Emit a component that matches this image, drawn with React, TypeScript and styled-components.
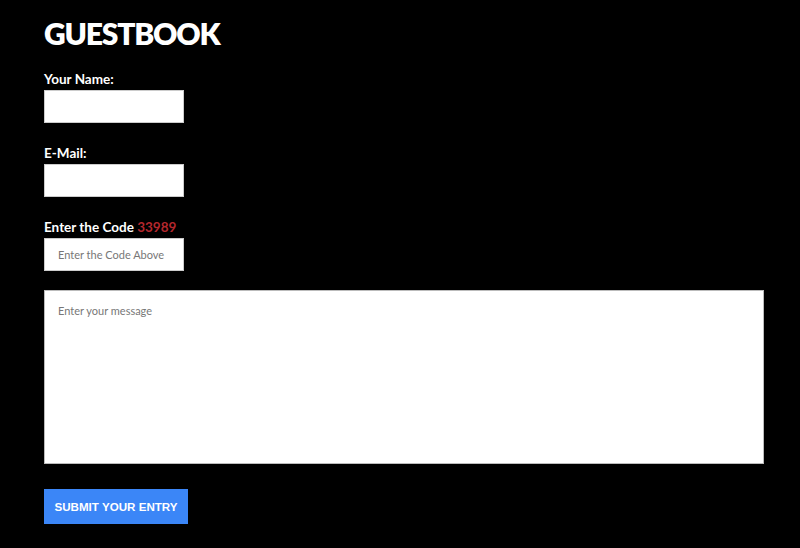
import React from "react";
import styled, { createGlobalStyle } from "styled-components";

const Global = createGlobalStyle`
  html, body { margin: 0; padding: 0; background: #000; }
  body { font-family: "Lato", "Open Sans", sans-serif; }
  * { box-sizing: border-box; }
`;

const Page = styled.div`
  background: #000;
  min-height: 548px;
  padding: 14px 36px 0 44px;
`;

const Title = styled.h1`
  margin: 0 0 19px 0;
  color: #fff;
  font-family: "Lato", sans-serif;
  font-weight: 800;
  font-size: 30px;
  line-height: 38px;
  letter-spacing: -1.2px;
`;

const Form = styled.form`
  display: flex;
  flex-direction: column;
`;

const Field = styled.div<{ gap: number }>`
  display: flex;
  flex-direction: column;
  margin-bottom: ${(p) => p.gap}px;
`;

const Label = styled.label`
  color: #fff;
  font-family: "Lato", sans-serif;
  font-weight: 700;
  font-size: 13.5px;
  line-height: 16px;
  margin-bottom: 3px;
`;

const Code = styled.span`
  color: #b3272d;
`;

const Input = styled.input`
  width: 140px;
  height: 33px;
  border: 1px solid #ccc;
  background: #fff;
  padding: 0 13px;
  font-family: "Lato", sans-serif;
  font-size: 11px;
  color: #333;
  outline: none;
  &::placeholder { color: #777; }
`;

const TextArea = styled.textarea`
  width: 720px;
  height: 174px;
  border: 1px solid #bbb;
  background: #fff;
  padding: 13px 13px;
  font-family: "Lato", sans-serif;
  font-size: 11px;
  resize: none;
  outline: none;
  margin-bottom: 25px;
  &::placeholder { color: #777; }
`;

const Button = styled.button`
  align-self: flex-start;
  background: #3b86f7;
  color: #fff;
  border: none;
  width: 144px;
  height: 35px;
  padding: 0;
  font-family: "Liberation Sans", Arial, sans-serif;
  font-weight: 700;
  font-size: 11.6px;
  cursor: pointer;
`;

export default function App() {
  return (
    <>
      <Global />
      <Page>
        <Title>GUESTBOOK</Title>
        <Form onSubmit={(e) => e.preventDefault()}>
          <Field gap={22}>
            <Label>Your Name:</Label>
            <Input type="text" />
          </Field>
          <Field gap={22}>
            <Label>E-Mail:</Label>
            <Input type="email" />
          </Field>
          <Field gap={19}>
            <Label>
              Enter the Code <Code>33989</Code>
            </Label>
            <Input type="text" placeholder="Enter the Code Above" />
          </Field>
          <TextArea placeholder="Enter your message" />
          <Button type="submit">SUBMIT YOUR ENTRY</Button>
        </Form>
      </Page>
    </>
  );
}
